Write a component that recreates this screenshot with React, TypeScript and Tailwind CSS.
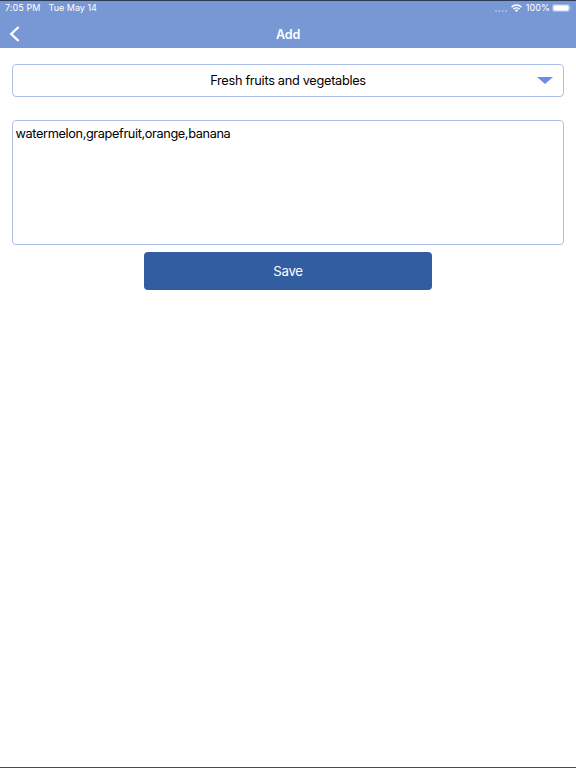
import { useState } from 'react';

const StatusBar = () => (
  <div className="flex h-[14px] items-center justify-between pl-[5px] pr-[4px] text-[9px] leading-none text-white">
    <div className="flex gap-[8px] pb-[2px]">
      <span className="tracking-[0.08px]">7:05 PM</span>
      <span>Tue May 14</span>
    </div>
    <div className="flex items-center">
      <svg className="mr-[4px] mt-[5px] h-[2px] w-[12px]" viewBox="0 0 12 2" fill="#b4c5ea">
        <circle cx="1" cy="1" r="0.9" />
        <circle cx="4.4" cy="1" r="0.9" />
        <circle cx="7.8" cy="1" r="0.9" />
        <circle cx="11.1" cy="1" r="0.9" />
      </svg>
      <svg className="mr-[4px] h-[8px] w-[11px]" viewBox="0 0 11 8" fill="none" stroke="white" strokeWidth="1.5">
        <path d="M0.6 3.1a7 7 0 0 1 9.8 0" />
        <path d="M2.5 5.1a4.3 4.3 0 0 1 6 0" />
        <path d="M5.5 8 3.9 6.4a2.2 2.2 0 0 1 3.2 0z" fill="white" stroke="none" />
      </svg>
      <span className="mr-[2px] pb-[2px] tracking-[0.08px]">100%</span>
      <svg className="h-[8px] w-[20px]" viewBox="0 0 20 8">
        <rect x="0.4" y="0.4" width="17.2" height="7.2" rx="2" fill="none" stroke="#b9c9eb" strokeWidth="0.7" />
        <rect x="1.3" y="1.3" width="15.4" height="5.4" rx="1" fill="white" />
        <path d="M18.5 2.7a1.4 1.4 0 0 1 0 2.6z" fill="#b9c9eb" />
      </svg>
    </div>
  </div>
);

export default function App() {
  const [items, setItems] = useState('watermelon,grapefruit,orange,banana');

  return (
    <div className="flex h-screen flex-col border-b border-[#4a4a4a] bg-white font-[Inter,sans-serif] text-black">
      <header className="h-[48px] border-t border-[#2f3c57] bg-[#7897d5]">
        <StatusBar />
        <div className="grid h-[33px] grid-cols-[40px_1fr_40px] items-center pt-[5px]">
          <button aria-label="Back" className="pl-[9px]">
            <svg className="h-[16px] w-[11px]" viewBox="0 0 11 16" fill="none" stroke="white" strokeWidth="2.3">
              <path d="M9.6 1 2.2 8l7.4 7" />
            </svg>
          </button>
          <h1 className="pt-[2px] text-center text-[12.5px] font-semibold leading-none tracking-[-0.1px] text-white">
            Add
          </h1>
        </div>
      </header>

      <main className="flex flex-col px-[12px] pt-[16px]">
        {/* Category picker */}
        <button className="grid h-[33px] grid-cols-[30px_1fr_30px] items-center rounded-[4px] border border-[#a9bfea]">
          <span className="col-start-2 pt-[2px] text-[12.75px] leading-none tracking-[-0.3px]">
            Fresh fruits and vegetables
          </span>
          <svg className="ml-[4px] h-[7px] w-[16px]" viewBox="0 0 16 7" fill="#6a8fde">
            <path d="M0 0h16L8 7z" />
          </svg>
        </button>

        <textarea
          value={items}
          onChange={(e) => setItems(e.target.value)}
          spellCheck={false}
          className="mt-[23px] h-[125px] resize-none rounded-[4px] border border-[#a9bfea] px-[2.5px] pt-[5px] text-[12.75px] leading-[16px] tracking-[-0.38px] outline-none"
        />

        <button className="mt-[7px] h-[38px] w-[288px] self-center rounded-[4px] bg-[#335da1] pt-[1px] text-[13.25px] tracking-[-0.3px] text-white">
          Save
        </button>
      </main>
    </div>
  );
}
